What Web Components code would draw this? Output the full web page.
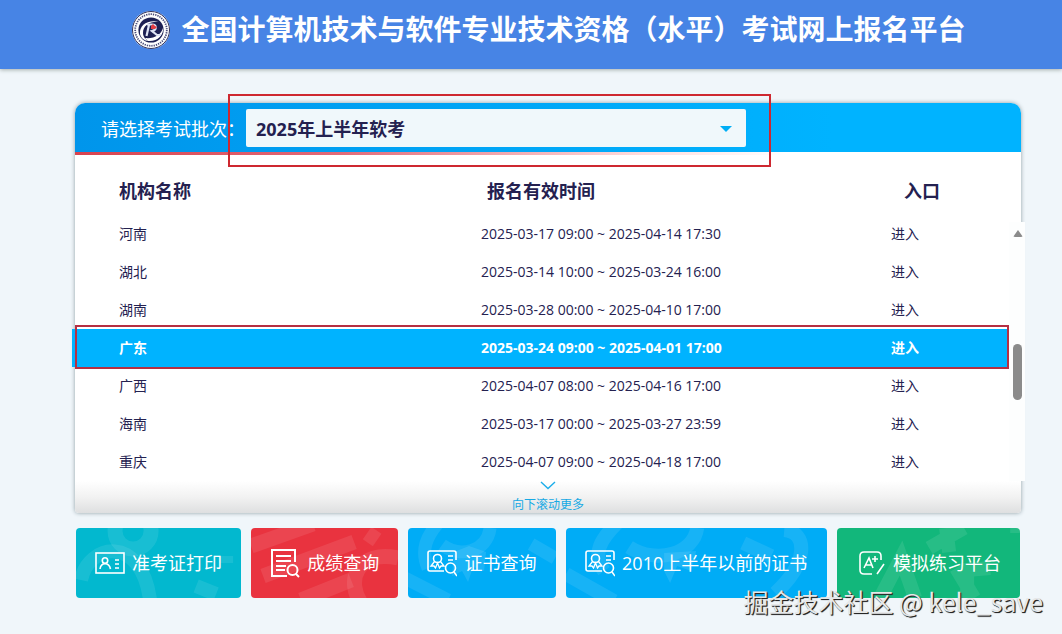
<!DOCTYPE html>
<html lang="zh-CN">
<head>
<meta charset="utf-8">
<title>全国计算机技术与软件专业技术资格（水平）考试网上报名平台</title>
<style>
  body { margin: 0; min-height: 100vh; background: #f0f6fa; color: #242150; font-family: "Open Sans", "Noto Sans CJK SC", sans-serif; }
  main { padding: 34px 41px 36px 75px; }
</style>
</head>
<body>
<site-header>全国计算机技术与软件专业技术资格（水平）考试网上报名平台</site-header>
<main>
  <exam-panel></exam-panel>
  <action-bar></action-bar>
</main>
<page-watermark>掘金技术社区 @ kele_save</page-watermark>

<script>
const define = (name, html, setup) => customElements.define(name, class extends HTMLElement {
  connectedCallback() {
    if (this.shadowRoot) return;
    const t = document.createElement('template');
    t.innerHTML = html;
    this.attachShadow({ mode: 'open' }).append(t.content.cloneNode(true));
    if (setup) setup(this, this.shadowRoot);
  }
});

define('site-header', `
<style>
  :host { display: flex; justify-content: center; align-items: center; gap: 12px; height: 69px; padding: 0 97px 0 132px; box-sizing: border-box; background: #4784e5; box-shadow: 0 1px 4px #a5aeac; color: #fff; }
  svg { width: 38px; height: 38px; flex: none; margin-bottom: 10px; }
  h1 { margin: 0 0 14px; font-size: 28px; line-height: 40px; font-weight: 700; white-space: nowrap; font-family: "Noto Sans CJK SC", sans-serif; }
</style>
<svg viewBox="0 0 38 38" aria-hidden="true">
  <circle cx="19" cy="19" r="19" fill="#fff"/>
  <circle cx="19" cy="19" r="18.5" fill="none" stroke="#30325c" stroke-width="1"/>
  <circle cx="19" cy="19" r="15.8" fill="none" stroke="#4a4c78" stroke-width="1.8" stroke-dasharray="1.3 1"/>
  <circle cx="19" cy="19" r="12.6" fill="#1d2053"/>
  <path d="M8 23C7 14 16 8 28 11C17 10 11 15 11 22C11 26 14 29 17 30C12 30 9 27 8 23Z" fill="#fff"/>
  <path d="M13 27C22 28 29 24 31 17C32 24 25 31 16 30Z" fill="#fff"/>
  <path d="M15 13.500H20C25 13.500 25 19 20 20L25 24H29M17 14L14.500 25" fill="none" stroke="#dfe4f5" stroke-width="2.2"/>
  <path d="M19 15L21 13L23 15L25 16L23 18H19Z" fill="#e33b43"/>
</svg>
<h1><slot></slot></h1>`);

define('batch-select', `
<style>
  :host { display: block; position: relative; width: 500px; }
  select { display: block; appearance: none; width: 100%; height: 38px; padding: 2px 10px 0; border: 0; border-radius: 2px; background: #f0f8fb; color: #242150; font: 700 18px/36px "Open Sans", "Noto Sans CJK SC", sans-serif; }
  .caret { position: absolute; right: 14px; top: 17px; border: 6px solid transparent; border-top-color: #00aef5; border-bottom: 0; }
  .mark { position: absolute; inset: -15px -25px -20px -18px; border: 2px solid #ce2830; pointer-events: none; }
</style>
<select aria-label="请选择考试批次"><option>2025年上半年软考</option></select>
<span class="caret"></span><span class="mark"></span>`);

define('scroll-rail', `
<style>
  :host { display: flex; flex-direction: column; justify-content: space-between; width: 16px; padding: 8px 0 0; box-sizing: border-box; background: #fdfefe; }
  .up { margin-left: 4px; width: 0; border: 5px solid transparent; border-bottom: 7px solid #8b8b8b; border-top: 0; border-radius: 2px; }
  .thumb { width: 9px; height: 56px; margin: 0 0 81px 4px; border-radius: 5px; background: #8b8b8b; }
</style>
<span class="up"></span><span class="thumb"></span>`);

define('exam-table', `
<style>
  :host { display: block; }
  table { width: 100%; table-layout: fixed; border-collapse: collapse; font-size: 14px; line-height: 20px; }
  th, td { box-sizing: border-box; padding: 0; text-align: left; white-space: nowrap; }
  th { height: 57px; padding-top: 8px; font-size: 18px; line-height: 26px; font-weight: 700; }
  td { height: 38px; }
  th:first-child, td:first-child { width: 409px; padding-left: 47px; }
  th:nth-child(2) { width: 410px; padding-left: 6px; }
  th:nth-child(3) { padding-left: 13px; }
  a { color: inherit; text-decoration: none; }
  tr.current { position: relative; background: #00b3ff; color: #fff; font-weight: 700; }
  .mark { position: absolute; inset: -4px -1px -2px 3px; border: 2px solid #b52f43; pointer-events: none; }
</style>
<table><thead><tr><th scope="col">机构名称</th><th scope="col">报名有效时间</th><th scope="col">入口</th></tr></thead><tbody></tbody></table>`,
(host, root) => {
  const rows = [
    ['河南', '2025-03-17 09:00 ~ 2025-04-14 17:30'],
    ['湖北', '2025-03-14 10:00 ~ 2025-03-24 16:00'],
    ['湖南', '2025-03-28 00:00 ~ 2025-04-10 17:00'],
    ['广东', '2025-03-24 09:00 ~ 2025-04-01 17:00'],
    ['广西', '2025-04-07 08:00 ~ 2025-04-16 17:00'],
    ['海南', '2025-03-17 00:00 ~ 2025-03-27 23:59'],
    ['重庆', '2025-04-07 09:00 ~ 2025-04-18 17:00']
  ];
  root.querySelector('tbody').innerHTML = rows.map(([name, time]) => {
    const on = name === '广东';
    return `<tr${on ? ' class="current"' : ''}><td>${name}</td><td>${time}</td><td><a href="#enter">进入</a>${on ? '<span class="mark"></span>' : ''}</td></tr>`;
  }).join('');
});

define('exam-panel', `
<style>
  :host { display: block; border-radius: 10px 10px 4px 4px; background: #fff; box-shadow: 0 0 4px #8e9da3; }
  .top { display: flex; align-items: center; gap: 12px; height: 52px; padding: 0 0 0 26px; box-sizing: border-box; border-radius: 10px 10px 0 0; background: linear-gradient(90deg, #0095eb, #00b3ff 80%); border-bottom: 3px solid; border-image: linear-gradient(90deg, #d8434f, #e26a78 28%, #fdd 60%, #fff 75%) 1; background-clip: padding-box; }
  .label { width: 133px; padding-top: 3px; font-size: 18px; line-height: 26px; color: #fff; white-space: nowrap; }
  .body { display: grid; grid-template-columns: 1fr 16px; margin: 0 -4px 0 -3px; }
  scroll-rail { margin-top: 67px; }
  exam-table { margin: 3px 1px 0 0; }
  footer { display: flex; flex-direction: column; align-items: center; height: 32px; border-radius: 0 0 4px 4px; background: linear-gradient(#fff, #f2f2f2 50%, #dedfe0); }
  footer svg { width: 16px; height: 9px; flex: none; margin-bottom: 6px; }
  button { padding: 0; border: 0; background: none; color: #16a9e4; font: 12px/16px "Noto Sans CJK SC", sans-serif; }
</style>
<div class="top"><span class="label">请选择考试批次：</span><batch-select></batch-select></div>
<div class="body"><exam-table></exam-table><scroll-rail></scroll-rail></div>
<footer>
  <svg viewBox="0 0 16 9" aria-hidden="true"><path d="M1 1L8 7.5L15 1" fill="none" stroke="#1badea" stroke-width="1.4"/></svg>
  <button type="button">向下滚动更多</button>
</footer>`);

define('action-button', `
<style>
  :host { display: block; }
  button { position: relative; overflow: hidden; display: flex; align-items: center; justify-content: center; gap: 7px; width: 100%; height: 70px; padding: 0; border: 0; border-radius: 4px; background: var(--tone); color: #fff; font: 18px/26px "Open Sans", "Noto Sans CJK SC", sans-serif; white-space: nowrap; }
  ::slotted(svg) { width: 30px; height: 30px; flex: none; fill: none; stroke: #fff; stroke-width: 1.6; position: relative; }
  ::slotted(svg.deco) { position: absolute; inset: 0; width: 100%; height: 100%; stroke-opacity: .09; stroke-width: 15; }
  .text { position: relative; }
</style>
<button type="button"><slot name="deco"></slot><slot name="icon"></slot><span class="text"><slot></slot></span></button>`);

define('action-bar', `
<style>
  :host { display: grid; grid-template-columns: 165fr 147fr 147fr 261fr 183fr; gap: 10px; margin: 15px 1px 0; }
</style>
<action-button style="--tone:#02b8cf">
  <svg slot="deco" class="deco" preserveAspectRatio="xMinYMin slice" viewBox="0 0 165 70"><circle cx="57" cy="3" r="18"/><path d="M5 52C12 16 65 5 74 72M120 58L140 66M150 28V35" stroke-width="14"/></svg>
  <svg slot="icon" viewBox="0 0 30 30"><rect x="1" y="5" width="28" height="20"/><circle cx="10" cy="12.5" r="2.7"/><path d="M5 21C6 14 14 14 15.500 21M20 12H24M20 16H24M20 20H24"/></svg>准考证打印
</action-button>
<action-button style="--tone:#e9333f">
  <svg slot="deco" class="deco" preserveAspectRatio="xMinYMin slice" viewBox="0 0 147 70"><path d="M0 18L62 -4M12 48L103 14M50 72L100 52M116 5L126 12"/><path d="M147 30C108 21 92 52 112 78"/></svg>
  <svg slot="icon" viewBox="0 0 30 30"><path d="M25 14V2H2V28H17M6 8H21M6 13H21M6 18H16M6 22H15" stroke-width="2"/><circle cx="22.500" cy="22" r="5" stroke-width="2"/><path d="M26 26L29 29" stroke-width="2"/></svg>成绩查询
</action-button>
<action-button style="--tone:#00acf6">
  <svg slot="deco" class="deco" preserveAspectRatio="xMinYMin slice" viewBox="0 0 147 70"><path d="M30 -5C19 8 12 22 20 40M82 0C79 24 52 30 34 17M-5 49L40 72M123 16L147 30" stroke-width="13"/><path d="M46 24L61 18L78 24L76 43L65 39L60 54L54 43L44 48Z" fill="#fff" fill-opacity=".1" stroke="none"/></svg>
  <svg slot="icon" viewBox="0 0 30 30"><path d="M17 23H3Q1 23 1 21V5Q1 3 3 3H27Q29 3 29 5V12M21 8H26M21 12H26"/><circle cx="10.500" cy="10.500" r="4"/><path d="M7.500 13.500L4 18H7L8.500 20L10.500 15L12.500 20L14 18H17L13.500 13.500" stroke-width="1.3"/><circle cx="23.500" cy="20" r="5"/><path d="M27 24L30 28"/></svg>证书查询
</action-button>
<action-button style="--tone:#00acf6">
  <svg slot="deco" class="deco" preserveAspectRatio="xMinYMin slice" viewBox="0 0 261 70"><path d="M51 -5C36 10 25 25 38 43M131 0C128 25 91 37 63 19M0 46L48 73M177 15L205 28M218 2C242 4 242 35 209 65" stroke-width="14"/><path d="M98 25L130 23L125 43L111 38L104 55L98 43Z" fill="#fff" fill-opacity=".1" stroke="none"/></svg>
  <svg slot="icon" viewBox="0 0 30 30"><path d="M17 23H3Q1 23 1 21V5Q1 3 3 3H27Q29 3 29 5V12M21 8H26M21 12H26"/><circle cx="10.500" cy="10.500" r="4"/><path d="M7.500 13.500L4 18H7L8.500 20L10.500 15L12.500 20L14 18H17L13.500 13.500" stroke-width="1.3"/><circle cx="23.500" cy="20" r="5"/><path d="M27 24L30 28"/></svg>2010上半年以前的证书
</action-button>
<action-button style="--tone:#12b77b">
  <svg slot="deco" class="deco" preserveAspectRatio="xMinYMin slice" viewBox="0 0 183 70"><path d="M43 70L64 30L78 70M92 20L127 0M109 0L112 24M180 -4V5M130 72V42L153 40M119 40L137 70" stroke-width="14"/></svg>
  <svg slot="icon" viewBox="0 0 30 30"><path d="M25 12V8Q25 4 21 4H8Q4 4 4 8V22Q4 26 8 26H16M21 26L28 16M8 20L13 10L17 20M10 17H16M19 8V14M16 11H22"/></svg>模拟练习平台
</action-button>`);

define('page-watermark', `
<style>
  :host { position: absolute; right: 19px; bottom: 15px; color: #e6e8e9; font: 25px/36px "Noto Sans CJK SC", sans-serif; text-shadow: 1px 1px 1px #222, 1px 1px 0 #444; white-space: nowrap; pointer-events: none; }
</style><slot></slot>`);
</script>
</body>
</html>
